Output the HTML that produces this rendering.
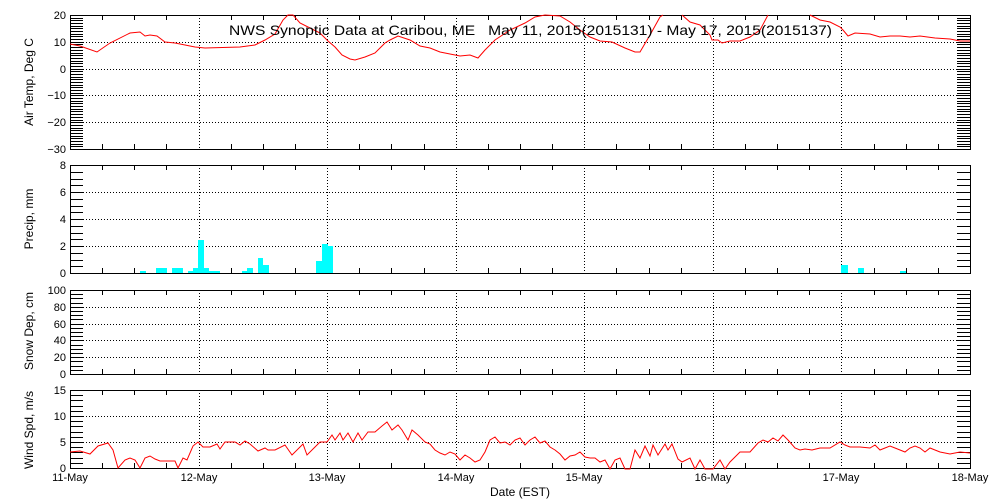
<!DOCTYPE html>
<html><head><meta charset="utf-8"><style>
html,body{margin:0;padding:0;background:#fff;width:1000px;height:500px;overflow:hidden}
svg{display:block}
text{font-family:"Liberation Sans",sans-serif;font-size:11px;fill:#000}
</style></head><body>
<svg id="s" width="1000" height="500" xmlns="http://www.w3.org/2000/svg">
<g id="g"></g>
<polyline fill="none" stroke="#f00" stroke-width="1" points="70,44 80,46 97,52 110,43 130,33 140,32 145,36 150,35 157,36 165,42 175,43 185,45 195,47 205,48 240,47 255,45 265,40 275,34 283,20 288,15 293,15 300,23 310,28 320,33 328,41 335,47 342,55 350,59 355,60 365,57 375,53 385,43 390,40 398,36 410,40 420,46 430,48 440,52 450,54 460,56 470,55 478,58 485,50 495,40 510,30 525,23 535,17 545,15 560,16 570,22 580,30 590,37 600,41 612,42 625,48 635,52 640,52 650,35 660,17 663,15"/>
<polyline fill="none" stroke="#f00" stroke-width="1" points="682,15 690,22 700,25 705,30 710,35 712,40 718,40 722,43 730,41 740,41 750,37 760,30 768,15"/>
<polyline fill="none" stroke="#f00" stroke-width="1" points="810,15 820,20 830,22 840,27 843,30 848,36 855,33 870,34 880,37 890,36 900,36 910,37 920,36 935,38 950,39 960,41 970,41"/>
<g fill="#00ffff">
<rect x="140" y="271" width="6" height="2"/><rect x="156" y="268" width="11" height="5"/><rect x="172" y="268" width="11" height="5"/>
<rect x="188" y="271" width="5" height="2"/><rect x="193" y="268" width="5" height="5"/><rect x="198" y="240" width="6" height="33"/>
<rect x="204" y="268" width="5" height="5"/><rect x="209" y="271" width="11" height="2"/><rect x="242" y="271" width="5" height="2"/>
<rect x="247" y="268" width="6" height="5"/><rect x="258" y="258" width="5" height="15"/><rect x="263" y="265" width="6" height="8"/>
<rect x="316" y="261" width="6" height="12"/><rect x="322" y="244" width="6" height="29"/><rect x="328" y="246" width="5" height="27"/>
<rect x="841" y="265" width="7" height="8"/><rect x="858" y="268" width="6" height="5"/><rect x="900" y="271" width="6" height="2"/>
</g>
<polyline fill="none" stroke="#f00" stroke-width="1" points="70,452 80,451 90,454 98,446 108,443 113,450 118,468 125,460 130,458 135,460 140,468 145,458 150,456 155,459 160,461 175,461 178,468 183,458 187,460 193,446 198,442 203,447 210,447 217,444 220,449 225,442 235,442 240,445 245,441 250,444 258,451 265,448 268,450 275,450 285,445 292,455 303,444 307,455 320,442 327,442 332,435 335,440 340,433 343,440 348,433 353,442 358,433 362,440 368,432 375,432 382,426 387,422 392,430 398,425 402,430 408,440 412,430 418,435 425,442 430,444 435,450 440,453 445,455 450,452 455,454 460,460 465,455 470,458 475,462 480,460 485,452 490,440 495,437 500,443 505,442 510,445 515,440 520,438 525,445 530,440 535,437 540,443 545,441 550,447 555,450 560,454 565,460 570,456 575,455 580,452 585,457 590,458 595,458 600,462 605,460 610,469 615,460 620,458 625,469 630,469 635,450 640,458 645,446 650,456 653,445 658,455 665,444 668,450 672,444 678,459 682,462 690,458 695,469 700,460 705,469 713,469 720,460 725,469 730,462 740,452 750,452 758,443 763,440 768,442 773,438 778,441 783,435 788,440 795,448 800,450 805,449 812,450 820,448 830,448 840,442 845,445 850,447 860,447 870,448 875,445 880,450 885,448 890,446 895,448 900,450 905,452 910,448 915,446 920,448 925,452 930,448 935,450 940,452 950,454 960,452 970,453"/>
<text x="229" y="35" textLength="603" lengthAdjust="spacingAndGlyphs" style="font-size:14px;white-space:pre">NWS Synoptic Data at Caribou, ME   May 11, 2015(2015131) - May 17, 2015(2015137)</text>
<text x="520" y="496" text-anchor="middle" style="font-size:12px">Date (EST)</text>
<text transform="translate(33,82) rotate(-90)" text-anchor="middle" style="font-size:12px">Air Temp, Deg C</text>
<text transform="translate(33,219) rotate(-90)" text-anchor="middle" style="font-size:12px">Precip, mm</text>
<text transform="translate(33,331) rotate(-90)" text-anchor="middle" style="font-size:12px">Snow Dep, cm</text>
<text transform="translate(33,430) rotate(-90)" text-anchor="middle" style="font-size:12px">Wind Spd, m/s</text>
</svg>
<script>
var g=document.getElementById('g'),h='';
function L(x1,y1,x2,y2,d){h+='<line x1="'+x1+'" y1="'+y1+'" x2="'+x2+'" y2="'+y2+'" stroke="#000" stroke-width="1"'+(d?' stroke-dasharray="1,2"':'')+'/>';}
function T(x,y,s,a){h+='<text x="'+x+'" y="'+y+'" text-anchor="'+(a||'end')+'">'+s+'</text>';}
var X0=70,X1=970,days=[];for(var i=0;i<8;i++)days.push(X0+i*(X1-X0)/7);
var P=[[15,149,-30,20,1,10],[165,273,0,8,0.5,2],[290,374,0,100,5,20],[390,468,0,15,1,5]];
P.forEach(function(p){var t=p[0],b=p[1],lo=p[2],hi=p[3];
 function Y(v){return b-(v-lo)/(hi-lo)*(b-t);}
 h+='<rect x="'+(X0+.5)+'" y="'+(t+.5)+'" width="'+(X1-X0)+'" height="'+(b-t)+'" fill="none" stroke="#000"/>';
 for(var v=lo;v<=hi+1e-6;v+=p[4]){var y=Math.round(Y(v))+.5;L(X0,y,X0+13,y);L(X1-13,y,X1,y);}
 for(var v=lo;v<=hi+1e-6;v+=p[5]){var y=Math.round(Y(v))+.5;if(v>lo&&v<hi)L(X0+13,y,X1-13,y,1);T(X0-4,Math.round(Y(v))+4,v<0?'\u2212'+(-v):v);}
 for(var k=1;k<28;k++){var x=Math.round(X0+k*(X1-X0)/28)+.5;if(k%4==0)L(x,t,x,b,1);else{L(x,t,x,t+5);L(x,b-5,x,b);}}
});
var lab=['11-May','12-May','13-May','14-May','15-May','16-May','17-May','18-May'];
days.forEach(function(x,i){T(Math.round(x),481,lab[i],'middle');});
g.innerHTML=h;
</script>
</body></html>
